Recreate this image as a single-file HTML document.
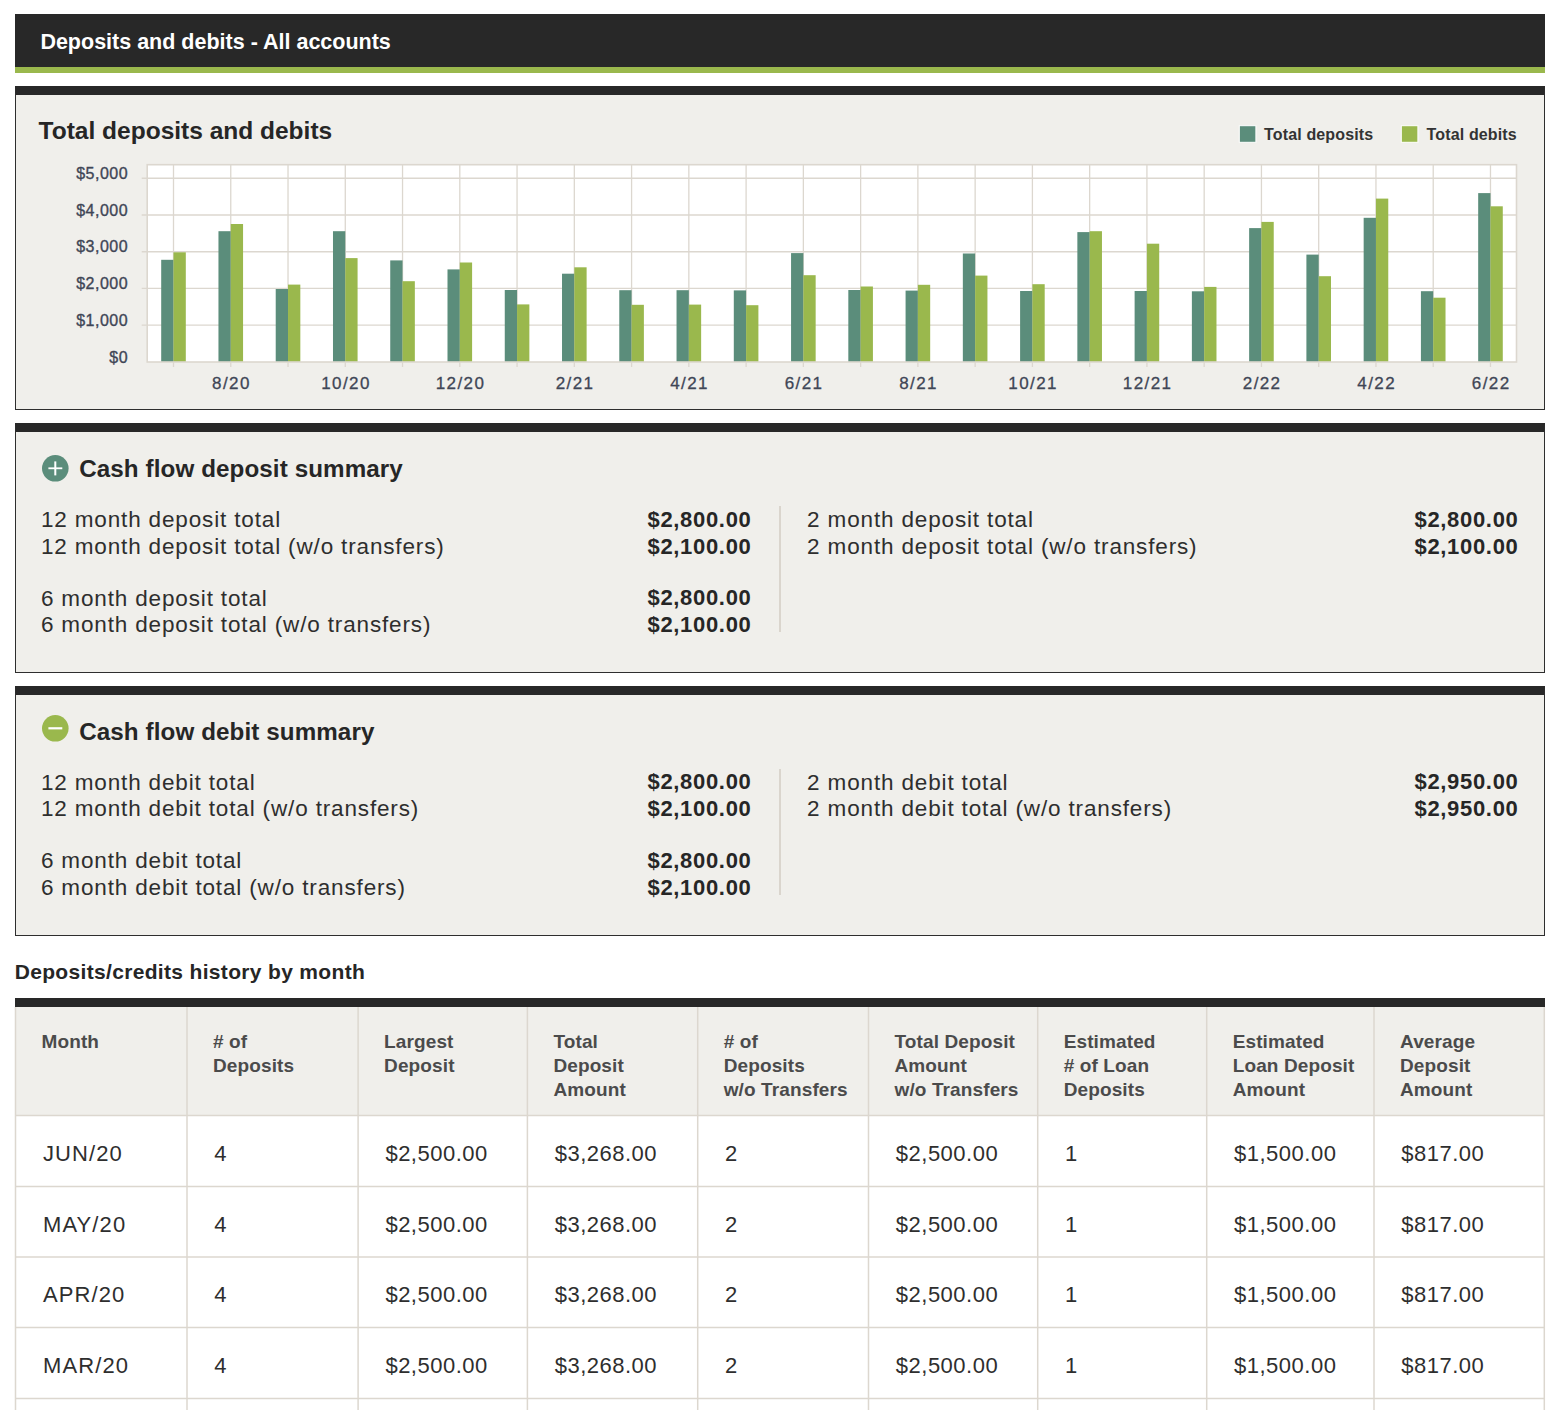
<!DOCTYPE html>
<html><head><meta charset="utf-8"><style>
html,body{margin:0;padding:0;background:#fff;}
body{width:1560px;height:1410px;position:relative;overflow:hidden;font-family:"Liberation Sans",sans-serif;color:#262626;}
.t{position:absolute;white-space:pre;line-height:0;height:0;}
.hdr{position:absolute;left:15px;top:14px;width:1530px;height:53px;background:#282828;border-bottom:6px solid #9ab84d;}
.box{position:absolute;left:15px;width:1530px;background:#f0efeb;border-left:1.5px solid #2e2e2e;border-right:1.5px solid #2e2e2e;border-bottom:1px solid #2e2e2e;border-top:9px solid #282828;box-sizing:border-box;}
.h1{font-size:21.5px;color:#fff;font-weight:700;}
.ctitle{font-size:24.5px;font-weight:700;}
.stitle{font-size:24.2px;font-weight:700;letter-spacing:0.1px;}
.row{font-size:22.5px;letter-spacing:0.85px;color:#2e2e2e;}
.val{font-size:22px;font-weight:700;letter-spacing:0.68px;}
.tt{font-size:21px;font-weight:700;letter-spacing:0.33px;}
.th{font-size:19px;font-weight:700;color:#4b4b4b;letter-spacing:0.12px;}
.td{font-size:22px;letter-spacing:0.5px;color:#2e2e2e;}
.mo{font-size:22px;letter-spacing:1.1px;color:#2e2e2e;}
.vdiv{position:absolute;left:779.3px;width:1.5px;background:#dad5cd;}
.ic{position:absolute;}
.hl{position:absolute;left:15px;width:1530px;height:1.4px;background:#dcd7cf;}
.vl{position:absolute;top:1007px;height:410px;width:1.4px;background:#dcd7cf;}
svg text{font-family:"Liberation Sans",sans-serif;}
.yl{font-size:16px;fill:#3f4656;letter-spacing:0.5px;stroke:#3f4656;stroke-width:0.35px;}
.xl{font-size:17px;fill:#3f4656;letter-spacing:1.4px;stroke:#3f4656;stroke-width:0.3px;}
.lg{font-size:16px;font-weight:700;fill:#333;letter-spacing:0.15px;}
</style></head><body>
<div class="hdr"></div>
<div class="t h1" style="left:40.40px;top:42.25px">Deposits and debits - All accounts</div>
<div class="box" style="top:86px;height:323.8px"></div>
<div class="t ctitle" style="left:38.60px;top:130.81px">Total deposits and debits</div>
<svg style="position:absolute;left:0;top:0" width="1560" height="420" viewBox="0 0 1560 420">
<rect x="147.2" y="164.7" width="1369.30" height="197.30" fill="#fff"/>
<line x1="141.7" y1="178.3" x2="1516.5" y2="178.3" stroke="#dcd7cf" stroke-width="1.4"/>
<line x1="141.7" y1="215.0" x2="1516.5" y2="215.0" stroke="#dcd7cf" stroke-width="1.4"/>
<line x1="141.7" y1="251.7" x2="1516.5" y2="251.7" stroke="#dcd7cf" stroke-width="1.4"/>
<line x1="141.7" y1="288.4" x2="1516.5" y2="288.4" stroke="#dcd7cf" stroke-width="1.4"/>
<line x1="141.7" y1="325.1" x2="1516.5" y2="325.1" stroke="#dcd7cf" stroke-width="1.4"/>
<line x1="173.50" y1="164.7" x2="173.50" y2="367" stroke="#dcd7cf" stroke-width="1.3"/>
<line x1="230.76" y1="164.7" x2="230.76" y2="367" stroke="#dcd7cf" stroke-width="1.3"/>
<line x1="288.02" y1="164.7" x2="288.02" y2="367" stroke="#dcd7cf" stroke-width="1.3"/>
<line x1="345.28" y1="164.7" x2="345.28" y2="367" stroke="#dcd7cf" stroke-width="1.3"/>
<line x1="402.54" y1="164.7" x2="402.54" y2="367" stroke="#dcd7cf" stroke-width="1.3"/>
<line x1="459.80" y1="164.7" x2="459.80" y2="367" stroke="#dcd7cf" stroke-width="1.3"/>
<line x1="517.06" y1="164.7" x2="517.06" y2="367" stroke="#dcd7cf" stroke-width="1.3"/>
<line x1="574.32" y1="164.7" x2="574.32" y2="367" stroke="#dcd7cf" stroke-width="1.3"/>
<line x1="631.58" y1="164.7" x2="631.58" y2="367" stroke="#dcd7cf" stroke-width="1.3"/>
<line x1="688.84" y1="164.7" x2="688.84" y2="367" stroke="#dcd7cf" stroke-width="1.3"/>
<line x1="746.10" y1="164.7" x2="746.10" y2="367" stroke="#dcd7cf" stroke-width="1.3"/>
<line x1="803.36" y1="164.7" x2="803.36" y2="367" stroke="#dcd7cf" stroke-width="1.3"/>
<line x1="860.62" y1="164.7" x2="860.62" y2="367" stroke="#dcd7cf" stroke-width="1.3"/>
<line x1="917.88" y1="164.7" x2="917.88" y2="367" stroke="#dcd7cf" stroke-width="1.3"/>
<line x1="975.14" y1="164.7" x2="975.14" y2="367" stroke="#dcd7cf" stroke-width="1.3"/>
<line x1="1032.40" y1="164.7" x2="1032.40" y2="367" stroke="#dcd7cf" stroke-width="1.3"/>
<line x1="1089.66" y1="164.7" x2="1089.66" y2="367" stroke="#dcd7cf" stroke-width="1.3"/>
<line x1="1146.92" y1="164.7" x2="1146.92" y2="367" stroke="#dcd7cf" stroke-width="1.3"/>
<line x1="1204.18" y1="164.7" x2="1204.18" y2="367" stroke="#dcd7cf" stroke-width="1.3"/>
<line x1="1261.44" y1="164.7" x2="1261.44" y2="367" stroke="#dcd7cf" stroke-width="1.3"/>
<line x1="1318.70" y1="164.7" x2="1318.70" y2="367" stroke="#dcd7cf" stroke-width="1.3"/>
<line x1="1375.96" y1="164.7" x2="1375.96" y2="367" stroke="#dcd7cf" stroke-width="1.3"/>
<line x1="1433.22" y1="164.7" x2="1433.22" y2="367" stroke="#dcd7cf" stroke-width="1.3"/>
<line x1="1490.48" y1="164.7" x2="1490.48" y2="367" stroke="#dcd7cf" stroke-width="1.3"/>
<rect x="161.20" y="259.8" width="12.3" height="102.20" fill="#5b8d7b"/>
<rect x="173.50" y="252.3" width="12.3" height="109.70" fill="#9ab84d"/>
<rect x="218.46" y="231.2" width="12.3" height="130.80" fill="#5b8d7b"/>
<rect x="230.76" y="224.0" width="12.3" height="138.00" fill="#9ab84d"/>
<rect x="275.72" y="289.0" width="12.3" height="73.00" fill="#5b8d7b"/>
<rect x="288.02" y="284.6" width="12.3" height="77.40" fill="#9ab84d"/>
<rect x="332.98" y="231.2" width="12.3" height="130.80" fill="#5b8d7b"/>
<rect x="345.28" y="258.1" width="12.3" height="103.90" fill="#9ab84d"/>
<rect x="390.24" y="260.4" width="12.3" height="101.60" fill="#5b8d7b"/>
<rect x="402.54" y="281.2" width="12.3" height="80.80" fill="#9ab84d"/>
<rect x="447.50" y="269.4" width="12.3" height="92.60" fill="#5b8d7b"/>
<rect x="459.80" y="262.5" width="12.3" height="99.50" fill="#9ab84d"/>
<rect x="504.76" y="290.0" width="12.3" height="72.00" fill="#5b8d7b"/>
<rect x="517.06" y="304.4" width="12.3" height="57.60" fill="#9ab84d"/>
<rect x="562.02" y="273.7" width="12.3" height="88.30" fill="#5b8d7b"/>
<rect x="574.32" y="267.3" width="12.3" height="94.70" fill="#9ab84d"/>
<rect x="619.28" y="290.2" width="12.3" height="71.80" fill="#5b8d7b"/>
<rect x="631.58" y="304.8" width="12.3" height="57.20" fill="#9ab84d"/>
<rect x="676.54" y="290.2" width="12.3" height="71.80" fill="#5b8d7b"/>
<rect x="688.84" y="304.6" width="12.3" height="57.40" fill="#9ab84d"/>
<rect x="733.80" y="290.4" width="12.3" height="71.60" fill="#5b8d7b"/>
<rect x="746.10" y="305.2" width="12.3" height="56.80" fill="#9ab84d"/>
<rect x="791.06" y="253.1" width="12.3" height="108.90" fill="#5b8d7b"/>
<rect x="803.36" y="275.2" width="12.3" height="86.80" fill="#9ab84d"/>
<rect x="848.32" y="290.0" width="12.3" height="72.00" fill="#5b8d7b"/>
<rect x="860.62" y="286.5" width="12.3" height="75.50" fill="#9ab84d"/>
<rect x="905.58" y="290.6" width="12.3" height="71.40" fill="#5b8d7b"/>
<rect x="917.88" y="284.8" width="12.3" height="77.20" fill="#9ab84d"/>
<rect x="962.84" y="253.5" width="12.3" height="108.50" fill="#5b8d7b"/>
<rect x="975.14" y="275.6" width="12.3" height="86.40" fill="#9ab84d"/>
<rect x="1020.10" y="291.0" width="12.3" height="71.00" fill="#5b8d7b"/>
<rect x="1032.40" y="284.2" width="12.3" height="77.80" fill="#9ab84d"/>
<rect x="1077.36" y="232.1" width="12.3" height="129.90" fill="#5b8d7b"/>
<rect x="1089.66" y="231.2" width="12.3" height="130.80" fill="#9ab84d"/>
<rect x="1134.62" y="291.0" width="12.3" height="71.00" fill="#5b8d7b"/>
<rect x="1146.92" y="243.7" width="12.3" height="118.30" fill="#9ab84d"/>
<rect x="1191.88" y="291.3" width="12.3" height="70.70" fill="#5b8d7b"/>
<rect x="1204.18" y="286.9" width="12.3" height="75.10" fill="#9ab84d"/>
<rect x="1249.14" y="228.1" width="12.3" height="133.90" fill="#5b8d7b"/>
<rect x="1261.44" y="221.9" width="12.3" height="140.10" fill="#9ab84d"/>
<rect x="1306.40" y="254.6" width="12.3" height="107.40" fill="#5b8d7b"/>
<rect x="1318.70" y="276.2" width="12.3" height="85.80" fill="#9ab84d"/>
<rect x="1363.66" y="217.8" width="12.3" height="144.20" fill="#5b8d7b"/>
<rect x="1375.96" y="198.6" width="12.3" height="163.40" fill="#9ab84d"/>
<rect x="1420.92" y="291.2" width="12.3" height="70.80" fill="#5b8d7b"/>
<rect x="1433.22" y="297.7" width="12.3" height="64.30" fill="#9ab84d"/>
<rect x="1478.18" y="193.1" width="12.3" height="168.90" fill="#5b8d7b"/>
<rect x="1490.48" y="206.3" width="12.3" height="155.70" fill="#9ab84d"/>
<rect x="147.2" y="164.7" width="1369.30" height="197.30" fill="none" stroke="#dcd7cf" stroke-width="1.6"/>
<text x="127.5" y="179.0" text-anchor="end" class="yl" dx="0.6">$5,000</text>
<text x="127.5" y="215.7" text-anchor="end" class="yl" dx="0.6">$4,000</text>
<text x="127.5" y="252.4" text-anchor="end" class="yl" dx="0.6">$3,000</text>
<text x="127.5" y="289.1" text-anchor="end" class="yl" dx="0.6">$2,000</text>
<text x="127.5" y="325.8" text-anchor="end" class="yl" dx="0.6">$1,000</text>
<text x="127.5" y="362.7" text-anchor="end" class="yl" dx="0.6">$0</text>
<text x="230.76" y="389" text-anchor="middle" class="xl" dx="0.7">8/20</text>
<text x="345.28" y="389" text-anchor="middle" class="xl" dx="0.7">10/20</text>
<text x="459.80" y="389" text-anchor="middle" class="xl" dx="0.7">12/20</text>
<text x="574.32" y="389" text-anchor="middle" class="xl" dx="0.7">2/21</text>
<text x="688.84" y="389" text-anchor="middle" class="xl" dx="0.7">4/21</text>
<text x="803.36" y="389" text-anchor="middle" class="xl" dx="0.7">6/21</text>
<text x="917.88" y="389" text-anchor="middle" class="xl" dx="0.7">8/21</text>
<text x="1032.40" y="389" text-anchor="middle" class="xl" dx="0.7">10/21</text>
<text x="1146.92" y="389" text-anchor="middle" class="xl" dx="0.7">12/21</text>
<text x="1261.44" y="389" text-anchor="middle" class="xl" dx="0.7">2/22</text>
<text x="1375.96" y="389" text-anchor="middle" class="xl" dx="0.7">4/22</text>
<text x="1490.48" y="389" text-anchor="middle" class="xl" dx="0.7">6/22</text>
<rect x="1239.3" y="125.7" width="16.6" height="16.6" fill="#5b8d7b" stroke="#fff" stroke-width="1"/>
<text x="1264" y="139.8" class="lg">Total deposits</text>
<rect x="1401.3" y="125.7" width="16.6" height="16.6" fill="#9ab84d" stroke="#fff" stroke-width="1"/>
<text x="1426.5" y="139.8" class="lg">Total debits</text>
</svg>
<div class="box" style="top:423.4px;height:249.60px"></div>
<svg class="ic" style="left:41.9px;top:455.10px" width="27" height="27" viewBox="0 0 27 27"><circle cx="13.3" cy="13.3" r="13.3" fill="#5b8d7b"/><rect x="6.4" y="12.4" width="13.9" height="1.8" fill="#fff"/><rect x="12.3" y="6.4" width="2" height="14" fill="#fff"/></svg>
<div class="t stitle" style="left:79.20px;top:469.41px">Cash flow deposit summary</div>
<div class="t row" style="left:40.90px;top:520.10px">12 month deposit total</div>
<div class="t val" style="right:808.50px;top:520.08px">$2,800.00</div>
<div class="t row" style="left:40.90px;top:546.70px">12 month deposit total (w/o transfers)</div>
<div class="t val" style="right:808.50px;top:546.68px">$2,100.00</div>
<div class="t row" style="left:40.90px;top:598.50px">6 month deposit total</div>
<div class="t val" style="right:808.50px;top:598.48px">$2,800.00</div>
<div class="t row" style="left:40.90px;top:625.20px">6 month deposit total (w/o transfers)</div>
<div class="t val" style="right:808.50px;top:625.18px">$2,100.00</div>
<div class="t row" style="left:807.10px;top:520.10px">2 month deposit total</div>
<div class="t val" style="right:41.50px;top:520.08px">$2,800.00</div>
<div class="t row" style="left:807.10px;top:546.70px">2 month deposit total (w/o transfers)</div>
<div class="t val" style="right:41.50px;top:546.68px">$2,100.00</div>
<div class="vdiv" style="top:506.20px;height:126.2px"></div>
<div class="box" style="top:686.2px;height:249.80px"></div>
<svg class="ic" style="left:41.9px;top:715.30px" width="27" height="27" viewBox="0 0 27 27"><circle cx="13.3" cy="13.3" r="13.3" fill="#9ab84d"/><rect x="6.4" y="12.2" width="13.9" height="2.2" fill="#fff"/></svg>
<div class="t stitle" style="left:79.20px;top:732.41px">Cash flow debit summary</div>
<div class="t row" style="left:40.90px;top:782.50px">12 month debit total</div>
<div class="t val" style="right:808.50px;top:782.48px">$2,800.00</div>
<div class="t row" style="left:40.90px;top:808.70px">12 month debit total (w/o transfers)</div>
<div class="t val" style="right:808.50px;top:808.68px">$2,100.00</div>
<div class="t row" style="left:40.90px;top:860.70px">6 month debit total</div>
<div class="t val" style="right:808.50px;top:860.68px">$2,800.00</div>
<div class="t row" style="left:40.90px;top:887.90px">6 month debit total (w/o transfers)</div>
<div class="t val" style="right:808.50px;top:887.88px">$2,100.00</div>
<div class="t row" style="left:807.10px;top:782.50px">2 month debit total</div>
<div class="t val" style="right:41.50px;top:782.48px">$2,950.00</div>
<div class="t row" style="left:807.10px;top:808.70px">2 month debit total (w/o transfers)</div>
<div class="t val" style="right:41.50px;top:808.68px">$2,950.00</div>
<div class="vdiv" style="top:768.60px;height:126.2px"></div>
<div class="t tt" style="left:14.70px;top:972.12px">Deposits/credits history by month</div>
<div style="position:absolute;left:15px;top:1007px;width:1530px;height:108.6px;background:#f0efeb"></div>
<div style="position:absolute;left:15px;top:998.4px;width:1530px;height:9px;background:#282828"></div>
<svg style="position:absolute;left:0;top:0" width="1560" height="1410" viewBox="0 0 1560 1410"><g stroke="#dcd7cf" stroke-width="1.5"><line x1="16" y1="1115.6" x2="1544" y2="1115.6"/><line x1="16" y1="1186.4" x2="1544" y2="1186.4"/><line x1="16" y1="1257.0" x2="1544" y2="1257.0"/><line x1="16" y1="1327.6" x2="1544" y2="1327.6"/><line x1="16" y1="1398.4" x2="1544" y2="1398.4"/><line x1="15.5" y1="1007" x2="15.5" y2="1410"/><line x1="187.0" y1="1007" x2="187.0" y2="1410"/><line x1="358.1" y1="1007" x2="358.1" y2="1410"/><line x1="527.4" y1="1007" x2="527.4" y2="1410"/><line x1="697.7" y1="1007" x2="697.7" y2="1410"/><line x1="868.5" y1="1007" x2="868.5" y2="1410"/><line x1="1037.7" y1="1007" x2="1037.7" y2="1410"/><line x1="1206.7" y1="1007" x2="1206.7" y2="1410"/><line x1="1374.0" y1="1007" x2="1374.0" y2="1410"/><line x1="1544.3" y1="1007" x2="1544.3" y2="1410"/></g></svg>
<div class="t th" style="left:41.50px;top:1041.52px">Month</div>
<div class="t th" style="left:213.00px;top:1041.52px"># of</div>
<div class="t th" style="left:213.00px;top:1066.32px">Deposits</div>
<div class="t th" style="left:384.10px;top:1041.52px">Largest</div>
<div class="t th" style="left:384.10px;top:1066.32px">Deposit</div>
<div class="t th" style="left:553.40px;top:1041.52px">Total</div>
<div class="t th" style="left:553.40px;top:1066.32px">Deposit</div>
<div class="t th" style="left:553.40px;top:1090.32px">Amount</div>
<div class="t th" style="left:723.70px;top:1041.52px"># of</div>
<div class="t th" style="left:723.70px;top:1066.32px">Deposits</div>
<div class="t th" style="left:723.70px;top:1090.32px">w/o Transfers</div>
<div class="t th" style="left:894.50px;top:1041.52px">Total Deposit</div>
<div class="t th" style="left:894.50px;top:1066.32px">Amount</div>
<div class="t th" style="left:894.50px;top:1090.32px">w/o Transfers</div>
<div class="t th" style="left:1063.70px;top:1041.52px">Estimated</div>
<div class="t th" style="left:1063.70px;top:1066.32px"># of Loan</div>
<div class="t th" style="left:1063.70px;top:1090.32px">Deposits</div>
<div class="t th" style="left:1232.70px;top:1041.52px">Estimated</div>
<div class="t th" style="left:1232.70px;top:1066.32px">Loan Deposit</div>
<div class="t th" style="left:1232.70px;top:1090.32px">Amount</div>
<div class="t th" style="left:1400.00px;top:1041.52px">Average</div>
<div class="t th" style="left:1400.00px;top:1066.32px">Deposit</div>
<div class="t th" style="left:1400.00px;top:1090.32px">Amount</div>
<div class="t mo" style="left:43.00px;top:1154.08px">JUN/20</div>
<div class="t td" style="left:214.30px;top:1154.08px">4</div>
<div class="t td" style="left:385.40px;top:1154.08px">$2,500.00</div>
<div class="t td" style="left:554.70px;top:1154.08px">$3,268.00</div>
<div class="t td" style="left:725.00px;top:1154.08px">2</div>
<div class="t td" style="left:895.80px;top:1154.08px">$2,500.00</div>
<div class="t td" style="left:1065.00px;top:1154.08px">1</div>
<div class="t td" style="left:1234.00px;top:1154.08px">$1,500.00</div>
<div class="t td" style="left:1401.30px;top:1154.08px">$817.00</div>
<div class="t mo" style="left:43.00px;top:1224.78px">MAY/20</div>
<div class="t td" style="left:214.30px;top:1224.78px">4</div>
<div class="t td" style="left:385.40px;top:1224.78px">$2,500.00</div>
<div class="t td" style="left:554.70px;top:1224.78px">$3,268.00</div>
<div class="t td" style="left:725.00px;top:1224.78px">2</div>
<div class="t td" style="left:895.80px;top:1224.78px">$2,500.00</div>
<div class="t td" style="left:1065.00px;top:1224.78px">1</div>
<div class="t td" style="left:1234.00px;top:1224.78px">$1,500.00</div>
<div class="t td" style="left:1401.30px;top:1224.78px">$817.00</div>
<div class="t mo" style="left:43.00px;top:1295.48px">APR/20</div>
<div class="t td" style="left:214.30px;top:1295.48px">4</div>
<div class="t td" style="left:385.40px;top:1295.48px">$2,500.00</div>
<div class="t td" style="left:554.70px;top:1295.48px">$3,268.00</div>
<div class="t td" style="left:725.00px;top:1295.48px">2</div>
<div class="t td" style="left:895.80px;top:1295.48px">$2,500.00</div>
<div class="t td" style="left:1065.00px;top:1295.48px">1</div>
<div class="t td" style="left:1234.00px;top:1295.48px">$1,500.00</div>
<div class="t td" style="left:1401.30px;top:1295.48px">$817.00</div>
<div class="t mo" style="left:43.00px;top:1366.18px">MAR/20</div>
<div class="t td" style="left:214.30px;top:1366.18px">4</div>
<div class="t td" style="left:385.40px;top:1366.18px">$2,500.00</div>
<div class="t td" style="left:554.70px;top:1366.18px">$3,268.00</div>
<div class="t td" style="left:725.00px;top:1366.18px">2</div>
<div class="t td" style="left:895.80px;top:1366.18px">$2,500.00</div>
<div class="t td" style="left:1065.00px;top:1366.18px">1</div>
<div class="t td" style="left:1234.00px;top:1366.18px">$1,500.00</div>
<div class="t td" style="left:1401.30px;top:1366.18px">$817.00</div>
</body></html>
